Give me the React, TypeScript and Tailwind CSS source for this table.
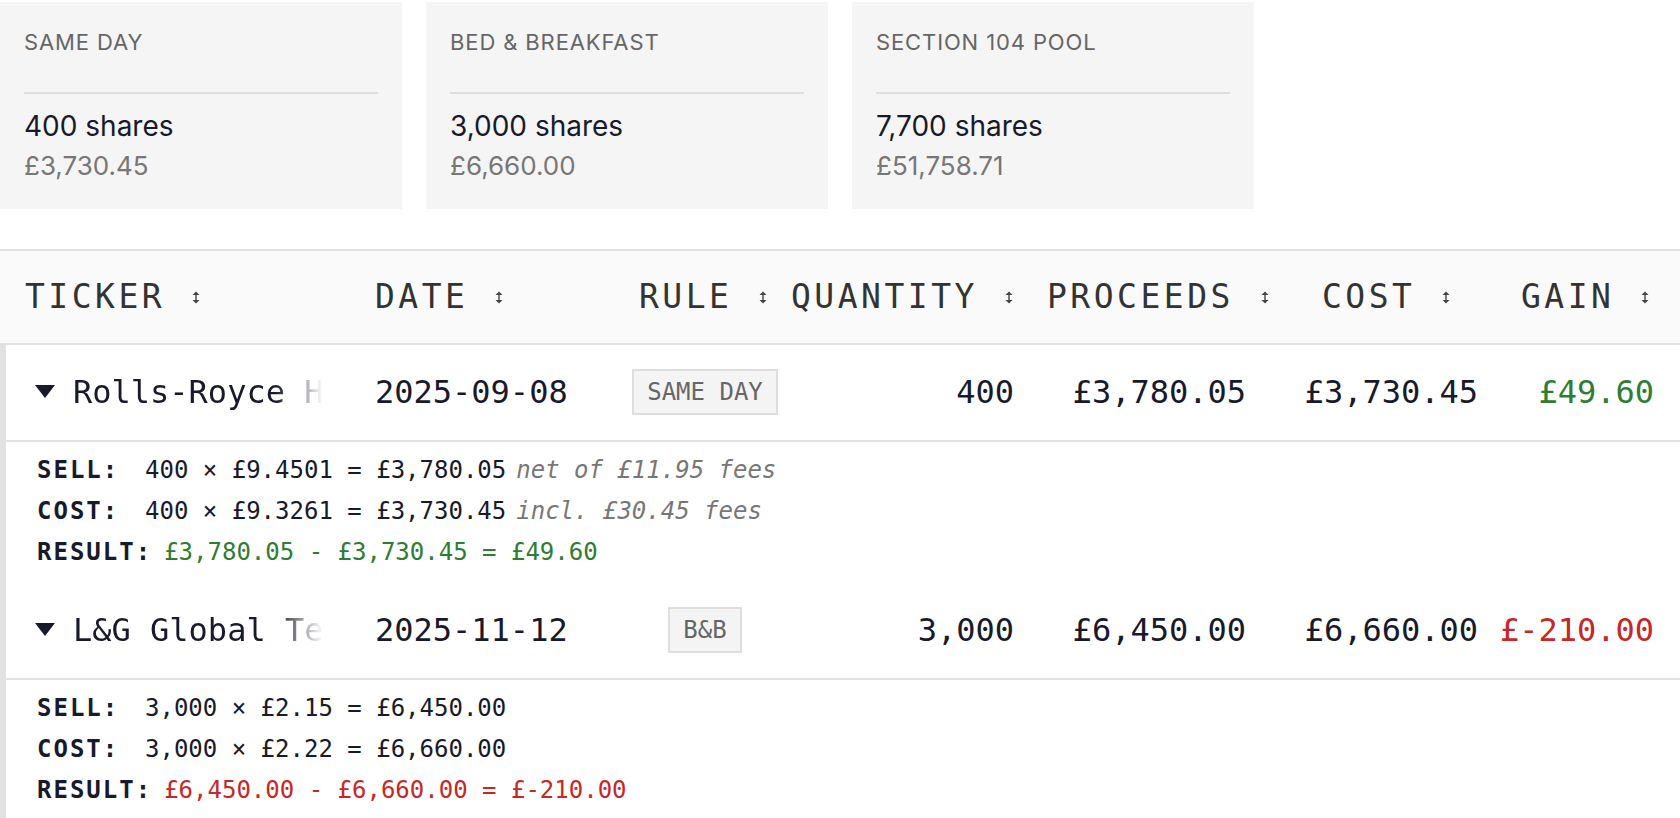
import type { ReactNode } from "react";

type Disposal = {
  name: string;
  date: string;
  rule: string;
  quantity: string;
  proceeds: string;
  cost: string;
  gain: string;
  positive: boolean;
  sell: string;
  sellNote?: string;
  costLine: string;
  costNote?: string;
  result: string;
};

const pools = [
  { label: "Same day", shares: "400 shares", value: "£3,730.45" },
  { label: "Bed & breakfast", shares: "3,000 shares", value: "£6,660.00" },
  { label: "Section 104 pool", shares: "7,700 shares", value: "£51,758.71" },
];

const disposals: Disposal[] = [
  {
    name: "Rolls-Royce Holdings",
    date: "2025-09-08",
    rule: "SAME DAY",
    quantity: "400",
    proceeds: "£3,780.05",
    cost: "£3,730.45",
    gain: "£49.60",
    positive: true,
    sell: "400 × £9.4501 = £3,780.05",
    sellNote: "net of £11.95 fees",
    costLine: "400 × £9.3261 = £3,730.45",
    costNote: "incl. £30.45 fees",
    result: "£3,780.05 - £3,730.45 = £49.60",
  },
  {
    name: "L&G Global Technology Index",
    date: "2025-11-12",
    rule: "B&B",
    quantity: "3,000",
    proceeds: "£6,450.00",
    cost: "£6,660.00",
    gain: "£-210.00",
    positive: false,
    sell: "3,000 × £2.15 = £6,450.00",
    costLine: "3,000 × £2.22 = £6,660.00",
    result: "£6,450.00 - £6,660.00 = £-210.00",
  },
];

const columns = ["Ticker", "Date", "Rule", "Quantity", "Proceeds", "Cost", "Gain"];

function SortIcon() {
  return (
    <svg width="8" height="13" viewBox="0 0 8 13" className="ml-[27px] shrink-0 text-[#444]">
      <path d="M4 0.5 L7.5 4 H0.5 Z" fill="currentColor" />
      <path d="M4 12.5 L0.5 9 H7.5 Z" fill="currentColor" />
      <rect x="3.3" y="3" width="1.4" height="7" fill="currentColor" />
    </svg>
  );
}

function DetailLine({ label, children }: { label: string; children: ReactNode }) {
  return (
    <div className="flex items-center whitespace-nowrap leading-[41px]">
      <span className="mr-[12px] inline-block min-w-[96px] font-bold tracking-[2px]">{label}</span>
      {children}
    </div>
  );
}

function DisposalRow({ d }: { d: Disposal }) {
  const tone = d.positive ? "text-[#2e7d32]" : "text-[#c62828]";
  return (
    <>
      <div className="grid h-[97px] grid-cols-[344px_278px_154px_232px_232px_232px_176px] items-center border-b-2 border-[#e2e2e2] pb-[2px] pr-[26px] text-[32px] text-[#181a2b]">
        <div className="flex items-center">
          <svg width="20" height="13" viewBox="0 0 20 13" className="ml-[29px] mr-[18px] shrink-0">
            <path d="M0 0 H20 L10 13 Z" fill="#181a2b" />
          </svg>
          <span className="w-[252px] overflow-hidden whitespace-nowrap [mask-image:linear-gradient(to_right,black_calc(100%-50px),transparent_calc(100%-2px))]">
            {d.name}
          </span>
        </div>
        <div className="pl-[25px]">{d.date}</div>
        <div className="flex justify-center">
          <span className="border-2 border-[#dedede] bg-[#f4f4f4] px-[13px] py-[7px] text-[24px] leading-[28px] text-[#666]">
            {d.rule}
          </span>
        </div>
        <div className="text-right">{d.quantity}</div>
        <div className="text-right">{d.proceeds}</div>
        <div className="text-right">{d.cost}</div>
        <div className={`text-right ${tone}`}>{d.gain}</div>
      </div>
      <div className="px-[31px] pb-[10px] pt-[8px] text-[24px] text-[#181a2b]">
        <DetailLine label="SELL:">
          <span>{d.sell}</span>
          {d.sellNote ? <span className="ml-[10px] italic text-[#777]">{d.sellNote}</span> : null}
        </DetailLine>
        <DetailLine label="COST:">
          <span>{d.costLine}</span>
          {d.costNote ? <span className="ml-[10px] italic text-[#777]">{d.costNote}</span> : null}
        </DetailLine>
        <DetailLine label="RESULT:">
          <span className={tone}>{d.result}</span>
        </DetailLine>
      </div>
    </>
  );
}

export default function App() {
  return (
    <div className="h-[818px] w-[1680px] overflow-hidden bg-white font-['DejaVu_Sans_Mono',monospace]">
      <div className="flex gap-[24px] pt-[2px] font-['Inter',sans-serif]">
        {pools.map((p) => (
          <div key={p.label} className="w-[402px] bg-[#f5f5f5] px-[24px] pb-[25px] pt-[22px]">
            <div className="mb-[32px] text-[22px] uppercase leading-[36px] tracking-[0.04em] text-[#666]">
              {p.label}
            </div>
            <div className="h-[2px] bg-[#dddddd]" />
            <div className="mt-[14px] text-[28px] leading-[36px] text-[#181a2b]">{p.shares}</div>
            <div className="mt-[4px] text-[26px] leading-[36px] text-[#777]">{p.value}</div>
          </div>
        ))}
      </div>

      <div className="mt-[40px] border-t-2 border-[#e2e2e2]">
        <div className="grid h-[94px] grid-cols-[350px_264px_152px_256px_275px_199px_159px] items-center border-b-2 border-[#e2e2e2] bg-[#fafafa] pl-[25px] text-[33px] text-[#333]">
          {columns.map((c) => (
            <div key={c} className="flex items-center">
              <span className="uppercase tracking-[3.5px]">{c}</span>
              <SortIcon />
            </div>
          ))}
        </div>
        <div className="border-l-[6px] border-[#e2e2e2]">
          {disposals.map((d) => (
            <DisposalRow key={d.name} d={d} />
          ))}
        </div>
      </div>
    </div>
  );
}
